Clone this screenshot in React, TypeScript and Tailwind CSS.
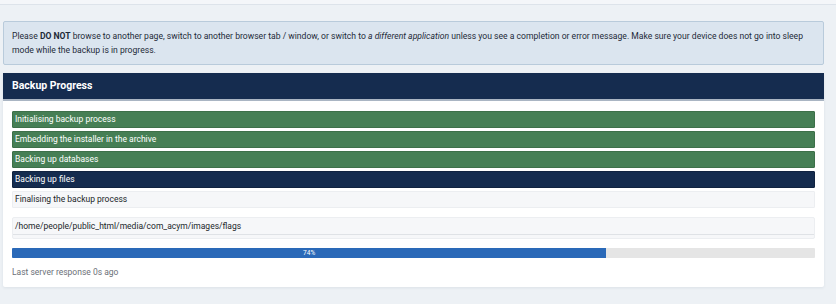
const steps = [
  { label: "Initialising backup process", state: "done" },
  { label: "Embedding the installer in the archive", state: "done" },
  { label: "Backing up databases", state: "done" },
  { label: "Backing up files", state: "active" },
  { label: "Finalising the backup process", state: "pending" },
];

const stepClass: Record<string, string> = {
  done: "bg-[#467f55] text-white border-[#3d7049]",
  active: "bg-[#152c4f] text-white border-[#102340]",
  pending: "bg-[#f6f7f9] text-[#22262a] border-[#eceef1]",
};

export default function App() {
  const percent = 74;

  return (
    <div className="h-[304px] w-[836px] overflow-hidden bg-[#edf1f5] font-['Roboto',sans-serif]">
      <div className="h-[5px] border-b border-[#dde3ea] bg-[#f4f6f9]" />
      <div className="ml-[3px] mr-[12px] pt-[16px]">
        <div className="rounded-[2px] border border-[#b9cbdb] bg-[#dbe5ef] px-[8px] py-[7px] text-[8.6px] leading-[14px] text-[#1d2a38]">
          Please <strong>DO NOT</strong> browse to another page, switch to another browser tab / window, or switch to{" "}
          <em>a different application</em> unless you see a completion or error message. Make sure your device does not go
          into sleep mode while the backup is in progress.
        </div>

        <div className="mt-[8px] rounded-[2px] bg-white shadow-[0_1px_3px_rgba(30,50,80,0.08)]">
          <div className="flex h-[28px] items-center border-b-2 border-[#aab5c3] bg-[#152c4f] px-[9px] text-[10.5px] font-bold text-white">
            Backup Progress
          </div>
          <div className="px-[9px] pb-[8px] pt-[10px]">
            <div className="flex flex-col gap-[3px]">
              {steps.map((s) => (
                <div
                  key={s.label}
                  className={`flex h-[17px] items-center rounded-[1px] border px-[2px] text-[8.5px] ${stepClass[s.state]}`}
                >
                  {s.label}
                </div>
              ))}
            </div>

            <div className="mt-[9px] rounded-[2px] border border-[#eceef1] bg-[#f6f7f9]">
              <div className="flex h-[17px] items-center border-b border-[#dfe2e6] px-[2px] text-[8.5px] text-[#22262a]">
                /home/people/public_html/media/com_acym/images/flags
              </div>
              <div className="h-[3px]" />
            </div>

            <div className="relative mt-[9px] h-[10px] overflow-hidden rounded-[1px] bg-[#e5e5e5]">
              <div className="h-full bg-[#2a69b8]" style={{ width: `${percent}%` }} />
              <div
                className="absolute inset-y-0 left-0 flex items-center justify-center text-[6.5px] leading-none text-white"
                style={{ width: `${percent}%` }}
              >
                {percent}%
              </div>
            </div>

            <div className="mt-[8px] text-[8.5px] text-[#6b7077]">Last server response 0s ago</div>
          </div>
        </div>
      </div>
    </div>
  );
}
